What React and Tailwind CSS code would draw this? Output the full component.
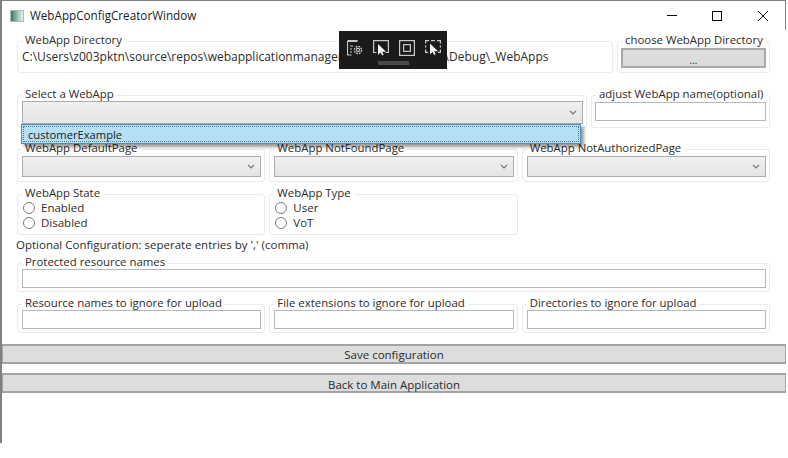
const font = "font-['Open_Sans','Noto_Sans',sans-serif]"

function Group({ title, className = "", children }) {
  return (
    <fieldset className={`border border-[#e3ecf1] rounded-[3px] pl-1 pr-[3px] pb-[3px] min-w-0 ${className}`}>
      <legend className="px-[3px] pb-[2px] text-[11.4px] leading-[14px] text-[#2b2b2b] whitespace-nowrap">
        {title}
      </legend>
      {children}
    </fieldset>
  )
}

function Combo({ className = "" }) {
  return (
    <div className={`flex items-center justify-end pr-[5px] border border-[#adadad] bg-gradient-to-b from-[#f0f0f0] to-[#e5e5e5] ${className}`}>
      <svg width="8" height="5" viewBox="0 0 8 5" fill="none" stroke="#777" strokeWidth="1.2">
        <path d="M1 1l3 3 3-3" />
      </svg>
    </div>
  )
}

function TextBox({ className = "" }) {
  return <div className={`h-[19px] border border-[#b4b8bb] bg-white ${className}`}></div>
}

function Radio({ label }) {
  return (
    <div className="flex items-center h-[15px] text-[11.5px] text-[#2b2b2b]">
      <span className="w-[12px] h-[12px] rounded-full border border-[#7c7c7c] bg-white ml-px mr-[6px]"></span>
      {label}
    </div>
  )
}

function WideButton({ label, className = "" }) {
  return (
    <button className={`block w-full h-[20px] border-y-2 border-x border-[#a3a3a3] bg-[#dddddd] text-[11.5px] leading-[14px] text-[#2b2b2b] ${className}`}>
      {label}
    </button>
  )
}

function ToolbarIcons() {
  return (
    <div className="flex gap-[10px] pl-[8px] pt-[9px] text-[#c8c8c8]">
      <svg width="16" height="16" viewBox="0 0 16 16" fill="none" stroke="currentColor" strokeWidth="1.1">
        <path d="M0.5 1h10" strokeWidth="2" />
        <path d="M0.5 1v14h4M3 6h3M3 9h2M3 12h2" />
        <circle cx="11" cy="10" r="1.6" />
        <circle cx="11" cy="10" r="3.6" strokeDasharray="1.8 1.0" strokeWidth="1.4" />
      </svg>
      <svg width="16" height="16" viewBox="0 0 16 16" fill="none" stroke="currentColor" strokeWidth="1.2">
        <path d="M3.5 12.5H0.6V0.6h14.8v11.9h-3" />
        <path d="M5 4v11l2.6-2.4 1.6 3 1.5-.8-1.5-3H13z" fill="#f5f5f5" stroke="none" />
      </svg>
      <svg width="16" height="16" viewBox="0 0 16 16" fill="none" stroke="currentColor" strokeWidth="1.2">
        <rect x="0.6" y="0.6" width="14.8" height="14.8" />
        <rect x="4.6" y="4.6" width="6.8" height="6.8" />
      </svg>
      <svg width="16" height="16" viewBox="0 0 16 16" fill="none" stroke="currentColor" strokeWidth="1.2">
        <path d="M0.6 3.5V0.6h3.5M11.9 0.6h3.5v2.9M0.6 9.5v2.9h2.5M13 12.4h2.4V9.5M6 0.6h4M0.6 5.5v2M15.4 5.5v2" />
        <path d="M5 3.5v11l2.6-2.4 1.6 3 1.5-.8-1.5-3H13z" fill="#f5f5f5" stroke="none" />
      </svg>
    </div>
  )
}

function App() {
  return (
    <div className={`relative w-[788px] h-[458px] bg-white overflow-hidden ${font}`}>
      <div className="w-[786px] h-[443px] border-l-2 border-t border-[#808080]">
        {/* TITLE BAR */}
        <div className="flex items-center h-[29px] pl-[8px] border-r border-[#808080]">
          <div className="w-[14px] h-[12px] border border-[#b5b5b5] bg-gradient-to-r from-[#2f7a70] via-[#8fbcae] to-[#eef3f5]"></div>
          <span className="ml-[6px] text-[11.7px] text-[#1a1a1a]">WebAppConfigCreatorWindow</span>
          <div className="ml-auto flex items-center gap-[35px] pr-[17px]">
            <div className="w-[10px] h-px bg-black"></div>
            <div className="w-[10px] h-[10px] border border-black"></div>
            <svg className="ml-px" width="10" height="10" viewBox="0 0 10 10" stroke="#111" strokeWidth="1">
              <path d="M0 0l10 10M10 0L0 10" />
            </svg>
          </div>
        </div>

        {/* FORM */}
        <div className="pl-[15px] pt-[3px] w-[770px]">
          <div className="flex gap-1">
            <Group title="WebApp Directory" className="w-[596px] h-[40px]">
              <div className="text-[12px] leading-[16px] text-[#2b2b2b] whitespace-nowrap overflow-hidden">
                C:\Users\z003pktn\source\repos\webapplicationmanager\WebAppsMgr\bin\Debug\_WebApps
              </div>
            </Group>
            <Group title="choose WebApp Directory" className="w-[153px] h-[40px]">
              <button className="block w-[145px] h-[20px] -ml-px -mt-[1px] border-2 border-[#a9a9a9] bg-[#dcdcdc] text-[10px] leading-[12px] pt-[3px] text-[#2b2b2b]">...</button>
            </Group>
          </div>

          <div className="flex gap-1 mt-[14px]">
            <Group title="Select a WebApp" className="w-[570px] h-[41px]">
              <Combo className="h-[23px] -mt-[2px]" />
            </Group>
            <Group title="adjust WebApp name(optional)" className="w-[179px] h-[41px]">
              <TextBox className="w-[171px] -ml-px -mt-[1px]" />
            </Group>
          </div>

          <div className="grid grid-cols-3 gap-1 w-[753px] mt-[13px]">
            <Group title="WebApp DefaultPage" className="h-[41px]"><Combo className="h-[21px] -mt-[1px]" /></Group>
            <Group title="WebApp NotFoundPage" className="h-[41px]"><Combo className="h-[21px] -mt-[1px]" /></Group>
            <Group title="WebApp NotAuthorizedPage" className="h-[41px]"><Combo className="h-[21px] -mt-[1px]" /></Group>
          </div>

          <div className="grid grid-cols-3 gap-1 w-[753px] mt-[4px]">
            <Group title="WebApp State" className="h-[49px]">
              <div className="-mt-[2px]">
                <Radio label="Enabled" />
                <Radio label="Disabled" />
              </div>
            </Group>
            <Group title="WebApp Type" className="h-[49px]">
              <div className="-mt-[2px]">
                <Radio label="User" />
                <Radio label="VoT" />
              </div>
            </Group>
          </div>

          <div className="text-[11.5px] leading-[16px] text-[#2b2b2b] -ml-[1px] mt-[2px]">
            Optional Configuration: seperate entries by ',' (comma)
          </div>

          <Group title="Protected resource names" className="w-[753px] h-[37px] mt-[2px]">
            <TextBox className="-mt-[2px]" />
          </Group>

          <div className="grid grid-cols-3 gap-1 w-[753px] mt-[4px]">
            <Group title="Resource names to ignore for upload" className="h-[37px]"><TextBox className="-mt-[2px]" /></Group>
            <Group title="File extensions to ignore for upload" className="h-[37px]"><TextBox className="-mt-[2px]" /></Group>
            <Group title="Directories to ignore for upload" className="h-[37px]"><TextBox className="-mt-[2px]" /></Group>
          </div>
        </div>

        <div className="mt-[11px]">
          <WideButton label="Save configuration" className="pt-[2px]" />
          <WideButton label="Back to Main Application" className="mt-[9px] pt-[3px]" />
        </div>
      </div>

      {/* VS debug toolbar */}
      <div className="absolute left-[339px] top-[31px] w-[108px] h-[38px] bg-[#1b1b1b]">
        <ToolbarIcons />
        <div className="absolute left-[39px] top-[30px] w-[31px] h-[4px] bg-[#4a4a4a]"></div>
      </div>

      {/* open combo list */}
      <div className="absolute left-[21px] top-[124px] w-[560px] h-[20px] border border-[#4b8fb5] bg-[#b5dff3] p-px shadow-[3px_3px_3px_rgba(0,0,0,0.4)]">
        <div className="h-full border border-dotted border-[#54778a] pl-[4px] text-[11.2px] leading-[16px] text-[#1a1a1a]">
          customerExample
        </div>
      </div>
    </div>
  )
}

export default App
